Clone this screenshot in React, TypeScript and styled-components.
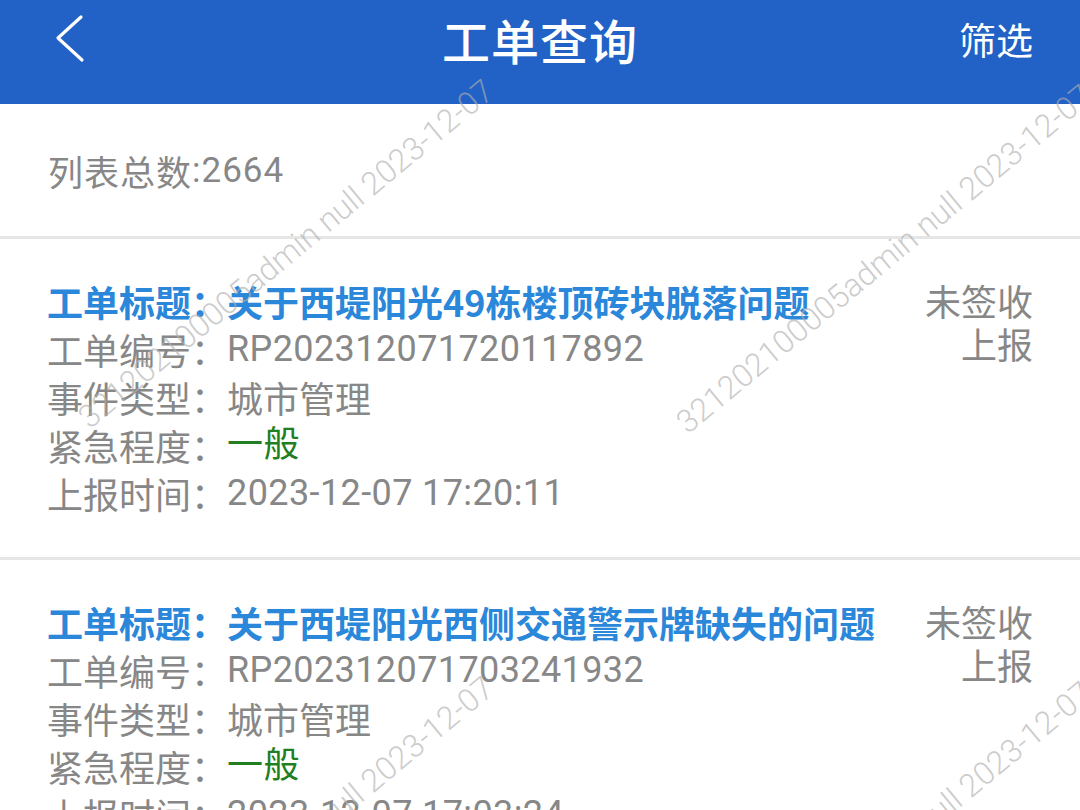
import React from 'react';
import styled, { createGlobalStyle } from 'styled-components';

const GlobalStyle = createGlobalStyle`
  html, body {
    margin: 0;
    padding: 0;
    background: #ffffff;
  }
  body {
    font-family: Roboto, "Noto Sans CJK SC", sans-serif;
  }
`;

const Page = styled.div`
  position: relative;
  width: 1080px;
  height: 810px;
  overflow: hidden;
  background: #ffffff;
`;

const Header = styled.header`
  height: 104px;
  box-sizing: border-box;
  padding: 0 47px 26px 55px;
  background: #2262c6;
  display: grid;
  grid-template-columns: 1fr auto 1fr;
  align-items: center;
  color: #ffffff;
`;

const BackButton = styled.div`
  display: flex;
  align-items: center;
`;

const Title = styled.h1`
  margin: 0;
  font-family: "Noto Sans CJK SC", sans-serif;
  font-size: 48px;
  font-weight: 500;
  letter-spacing: 1px;
  transform: translateX(-4px);
`;

const Filter = styled.div`
  justify-self: end;
  font-family: "Noto Sans CJK SC", sans-serif;
  font-size: 37px;
`;

const Summary = styled.div`
  height: 132px;
  display: flex;
  align-items: center;
  padding-left: 48px;
  font-size: 35px;
  letter-spacing: 1px;
  color: #878787;
  border-bottom: 3px solid #e6e6e6;
`;

const Card = styled.div`
  display: flex;
  padding: 38px 47px 40px 47px;
  border-bottom: 3px solid #e6e6e6;
`;

const Fields = styled.div`
  flex: 1;
  display: flex;
  flex-direction: column;
`;

const Row = styled.div<{ $head?: boolean }>`
  display: flex;
  line-height: 48px;
  font-size: 36px;
  font-weight: ${(p) => (p.$head ? 700 : 400)};
  color: ${(p) => (p.$head ? '#2a87da' : '#878787')};
  white-space: nowrap;
`;

const Label = styled.span`
  font-family: "Noto Sans CJK SC", sans-serif;
`;

const Value = styled.span<{ $tone?: 'green' }>`
  letter-spacing: 0.4px;
  color: ${(p) => (p.$tone === 'green' ? '#1f7f22' : 'inherit')};
`;

const Status = styled.div`
  display: flex;
  flex-direction: column;
  align-items: flex-end;
  font-family: "Noto Sans CJK SC", sans-serif;
  font-size: 36px;
  line-height: 43px;
  color: #878787;
  padding-top: 2px;
`;

const Watermarks = styled.div`
  position: absolute;
  inset: 0;
  pointer-events: none;
  overflow: hidden;
`;

const Mark = styled.span`
  position: absolute;
  font-family: Roboto, sans-serif;
  font-weight: 300;
  font-size: 32px;
  line-height: 1;
  color: rgba(175, 175, 175, 0.65);
  white-space: nowrap;
  transform-origin: 0 0;
  transform: rotate(-39.5deg) translateY(-0.85em);
`;

const orders = [
  {
    title: '关于西堤阳光49栋楼顶砖块脱落问题',
    code: 'RP202312071720117892',
    type: '城市管理',
    level: '一般',
    time: '2023-12-07 17:20:11',
  },
  {
    title: '关于西堤阳光西侧交通警示牌缺失的问题',
    code: 'RP202312071703241932',
    type: '城市管理',
    level: '一般',
    time: '2023-12-07 17:03:24',
  },
];

const marks: { x: number; y: number }[] = [];
for (let r = -1; r <= 1; r++) {
  for (let c = -1; c <= 1; c++) {
    marks.push({ x: 90 + c * 598, y: 430 + r * 597 + c * 5 });
  }
}

const Chevron = () => (
  <svg width="32" height="50" viewBox="0 0 32 50">
    <path
      d="M26 3 L3 24 L27 46"
      fill="none"
      stroke="#ffffff"
      strokeWidth="3.2"
      strokeLinecap="round"
      strokeLinejoin="round"
    />
  </svg>
);

const App = () => (
  <Page>
    <GlobalStyle />
    <Header>
      <BackButton>
        <Chevron />
      </BackButton>
      <Title>工单查询</Title>
      <Filter>筛选</Filter>
    </Header>
    <Summary>
      <Label>列表总数</Label>
      <span>:2664</span>
    </Summary>
    {orders.map((o) => (
      <Card key={o.code}>
        <Fields>
          <Row $head>
            <Label>工单标题：</Label>
            <Label>{o.title}</Label>
          </Row>
          <Row>
            <Label>工单编号：</Label>
            <Value>{o.code}</Value>
          </Row>
          <Row>
            <Label>事件类型：</Label>
            <Label>{o.type}</Label>
          </Row>
          <Row>
            <Label>紧急程度：</Label>
            <Value $tone="green">{o.level}</Value>
          </Row>
          <Row>
            <Label>上报时间：</Label>
            <Value>{o.time}</Value>
          </Row>
        </Fields>
        <Status>
          <span>未签收</span>
          <span>上报</span>
        </Status>
      </Card>
    ))}
    <Watermarks>
      {marks.map((m, i) => (
        <Mark key={i} style={{ left: m.x, top: m.y }}>
          321202100005admin null 2023-12-07
        </Mark>
      ))}
    </Watermarks>
  </Page>
);

export default App;
